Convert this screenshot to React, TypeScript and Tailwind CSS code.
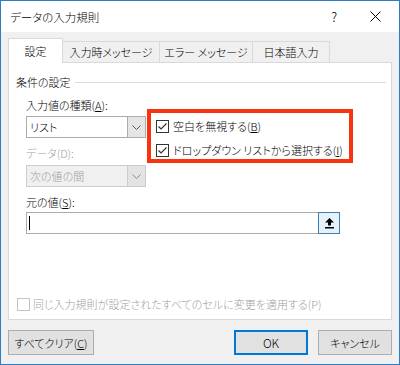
import React from "react";

function Chevron({ color = "#5a5a5a" }: { color?: string }) {
  return (
    <svg width="9" height="5" viewBox="0 0 9 5">
      <path d="M0.5 0.5 L4.5 4.5 L8.5 0.5" fill="none" stroke={color} strokeWidth="1" />
    </svg>
  );
}

function Check({ checked = false, disabled = false }: { checked?: boolean; disabled?: boolean }) {
  return (
    <span
      className={
        disabled
          ? "w-[13px] h-[13px] shrink-0 border border-[#c4c4c4] bg-white"
          : "w-[13px] h-[13px] shrink-0 border border-[#333333] bg-white flex items-center justify-center"
      }
    >
      {checked && (
        <svg width="11" height="11" viewBox="0 0 11 11">
          <path d="M1.5 5.5 L4 8 L9.5 2.5" fill="none" stroke="#333333" strokeWidth="1.2" />
        </svg>
      )}
    </span>
  );
}

export default function App() {
  return (
    <div className="w-[400px] h-[365px] border border-[#2d7dc5] bg-[#f0f0f0] flex flex-col text-[11px] leading-[16px] font-light whitespace-nowrap text-black font-['Noto_Sans_CJK_JP',sans-serif] [font-feature-settings:'palt']">
      {/* Title bar */}
      <div className="h-[31px] shrink-0 bg-white flex items-center pl-[9px] pr-[18px]">
        <span className="flex-1 text-[11.5px]">データの入力規則</span>
        <span className="text-[13px] mr-[33px]">?</span>
        <svg width="11" height="11" viewBox="0 0 11 11">
          <path d="M0.5 0.5 L10.5 10.5 M10.5 0.5 L0.5 10.5" stroke="#000" strokeWidth="1" />
        </svg>
      </div>

      <div className="px-[7px] pt-[6px]">
        {/* Tabs */}
        <div className="flex items-end h-[24px]">
          <div className="relative z-10 w-[55px] h-[25px] -mb-px bg-white border border-b-0 border-[#d9d9d9] flex items-center justify-center">
            設定
          </div>
          <div className="w-[98px] h-[21px] -ml-px border border-b-0 border-[#d9d9d9] flex items-center justify-center">
            入力時メッセージ
          </div>
          <div className="w-[94px] h-[21px] -ml-px border border-b-0 border-[#d9d9d9] flex items-center justify-center">
            エラー メッセージ
          </div>
          <div className="w-[78px] h-[21px] -ml-px border border-b-0 border-[#d9d9d9] flex items-center justify-center">
            日本語入力
          </div>
        </div>

        {/* Panel */}
        <div className="h-[258px] bg-white border border-[#d9d9d9] flex flex-col">
          <div className="flex items-center pl-[7px] pr-[5px] mt-[11px]">
            <span>条件の設定</span>
            <span className="flex-1 h-px bg-[#dcdcdc] ml-[4px]" />
          </div>

          <div className="pl-[17px] mt-[7px] flex">
            <div className="w-[120px] flex flex-col">
              <span>
                入力値の種類(<u>A</u>):
              </span>
              <div className="mt-[3px] h-[22px] flex border border-[#adadad] bg-white">
                <span className="flex-1 pl-[3px] flex items-center">リスト</span>
                <span className="w-[18px] border-l border-[#adadad] bg-[#e5e5e5] flex items-center justify-center">
                  <Chevron />
                </span>
              </div>
              <span className="mt-[7px] text-[#9d9d9d]">データ(D):</span>
              <div className="mt-[4px] h-[22px] flex border border-[#cccccc] bg-[#f0f0f0]">
                <span className="flex-1 pl-[3px] flex items-center text-[#9d9d9d]">次の値の間</span>
                <span className="w-[18px] border-l border-[#cccccc] bg-[#e3e3e3] flex items-center justify-center">
                  <Chevron color="#8a8a8a" />
                </span>
              </div>
            </div>

            <div className="ml-px mt-[12px] self-start w-[206px] border-[4px] border-[#f8330f] pl-[5px] pt-[5px] pb-px flex flex-col gap-[8px]">
              <label className="flex items-center gap-[4px] h-[16px]">
                <Check checked />
                <span>
                  空白を無視する(<u>B</u>)
                </span>
              </label>
              <label className="flex items-center gap-[4px] h-[16px]">
                <Check checked />
                <span>
                  ドロップダウン リストから選択する(<u>I</u>)
                </span>
              </label>
            </div>
          </div>

          <div className="pl-[17px] mt-[7px] flex flex-col">
            <span>
              元の値(<u>S</u>):
            </span>
            <div className="mt-[2px] flex h-[22px]">
              <div className="w-[293px] border border-[#adadad] bg-white flex items-center pl-[2px]">
                <span className="w-px h-[14px] bg-black" />
              </div>
              <button className="w-[22px] -ml-px border border-[#3c7fb1] bg-[#e5f1fb] flex items-center justify-center">
                <svg width="11" height="12" viewBox="0 0 11 12">
                  <path d="M5.5 1 L10 5.5 H7 V8.5 H4 V5.5 H1 Z" fill="#000" />
                  <rect x="1" y="10" width="9" height="1.5" fill="#000" />
                </svg>
              </button>
            </div>
          </div>

          <label className="mt-auto mb-[7px] pl-[8px] flex items-center gap-[3px] h-[16px] text-[#a0a0a0]">
            <Check disabled />
            <span>同じ入力規則が設定されたすべてのセルに変更を適用する(P)</span>
          </label>
        </div>

        {/* Buttons */}
        <div className="mt-[10px] flex h-[25px]">
          <button className="w-[86px] border border-[#adadad] bg-[#e1e1e1]">
            すべてクリア(<u>C</u>)
          </button>
          <button className="ml-auto w-[74px] border-2 border-[#0078d7] bg-[#e1e1e1] text-[12px]">OK</button>
          <button className="ml-[10px] w-[74px] border border-[#adadad] bg-[#e1e1e1]">キャンセル</button>
        </div>
      </div>
    </div>
  );
}
